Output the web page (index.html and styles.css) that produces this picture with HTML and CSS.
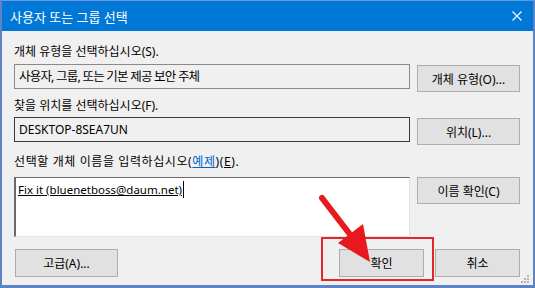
FILE: index.html
```html
<!DOCTYPE html>
<html lang="ko">
<head>
    <meta charset="UTF-8">
    <title>사용자 또는 그룹 선택</title>
    <link rel="stylesheet" href="styles.css">
</head>
<body>
    <div class="window">
        <!-- Title bar -->
        <div class="titlebar">
            <span class="title">사용자 또는 그룹 선택</span>
            <svg class="close" width="10" height="10" viewBox="0 0 10 10">
                <path d="M0.5 0.5 L9.5 9.5 M9.5 0.5 L0.5 9.5" stroke="#fff" stroke-width="1.1" fill="none"/>
            </svg>
        </div>

        <div class="content">
            <div class="label label-first">개체 유형을 선택하십시오(S).</div>
            <div class="field field-grey">사용자, 그룹, 또는 기본 제공 보안 주체</div>
            <div class="btn btn-side">개체 유형(O)...</div>

            <div class="label label-second">찾을 위치를 선택하십시오(F).</div>
            <div class="field field-dark">DESKTOP-8SEA7UN</div>
            <div class="btn btn-side">위치(L)...</div>

            <div class="label label-third">선택할 개체 이름을 입력하십시오(<span class="link">예제</span>)(<u>E</u>).</div>
            <div class="names"><span class="entry">Fix it (bluenetboss@daum.net)</span><span class="caret"></span></div>
            <div class="btn btn-side btn-check">이름 확인(C)</div>
        </div>

        <div class="footer">
            <div class="btn btn-advanced">고급(A)...</div>
            <div class="spacer"></div>
            <div class="btn btn-small">확인</div>
            <div class="btn btn-small">취소</div>
        </div>

        <!-- resize grip -->
        <svg class="grip" width="9" height="9" viewBox="0 0 9 9">
            <rect x="6" y="0" width="2" height="2" fill="#b4b4b4"/>
            <rect x="3" y="3" width="2" height="2" fill="#b4b4b4"/>
            <rect x="6" y="3" width="2" height="2" fill="#b4b4b4"/>
            <rect x="0" y="6" width="2" height="2" fill="#b4b4b4"/>
            <rect x="3" y="6" width="2" height="2" fill="#b4b4b4"/>
            <rect x="6" y="6" width="2" height="2" fill="#b4b4b4"/>
        </svg>
    </div>

    <!-- red highlight drawn over the screenshot -->
    <svg class="annot" width="535" height="288" viewBox="0 0 535 288">
        <rect x="322" y="238" width="111" height="42" fill="none" stroke="#e4262b" stroke-width="2"/>
        <line x1="322" y1="198" x2="352" y2="237" stroke="#e8191e" stroke-width="6" stroke-linecap="round"/>
        <polygon points="338,243 363,224 370,262" fill="#e8191e"/>
    </svg>
</body>
</html>
```

FILE: styles.css
```css
* {
    box-sizing: border-box;
}

body {
    margin: 0;
    font-family: "Noto Sans", "Noto Sans CJK KR", sans-serif;
    color: #000;
    position: relative;
}

.window {
    width: 535px;
    height: 288px;
    border: 2px solid #5d83c4;
    border-top: 1px solid #6f96d8;
    border-bottom-width: 3px;
    background-color: #f0f0f0;
    display: flex;
    flex-direction: column;
    position: relative;
}

.titlebar {
    height: 30px;
    flex: none;
    background-color: #0078d7;
    color: #fff;
    display: flex;
    align-items: center;
    justify-content: space-between;
    padding: 0 11px 0 8px;
    font-size: 13px;
}

.close {
    display: block;
}

.content {
    display: grid;
    grid-template-columns: 396px 103px;
    column-gap: 7px;
    align-items: start;
    padding: 13px 13px 0 12px;
}

.label {
    grid-column: 1 / 3;
    font-size: 12px;
    line-height: 16px;
    height: 16px;
    white-space: nowrap;
}

.label-first {
    margin-bottom: 4px;
}

.label-second {
    margin-top: 6px;
    margin-bottom: 3px;
}

.label-third {
    margin-top: 9px;
    margin-bottom: 7px;
    letter-spacing: 0.6px;
}

.link {
    color: #0066cc;
    text-decoration: underline;
}

.field {
    height: 25px;
    background-color: #f0f0f0;
    padding: 0 4px;
    line-height: 23px;
    white-space: nowrap;
}

.field-grey {
    border: 1px solid #8a8a8a;
    font-size: 12.5px;
    letter-spacing: -0.8px;
}

.field-dark {
    border: 1px solid #3a3a3a;
    font-size: 12px;
}

.names {
    height: 60px;
    background-color: #fff;
    border-top: 1px solid #6a6a6a;
    border-left: 2px solid #6a6a6a;
    border-right: 1px solid #e3e3e3;
    border-bottom: 1px solid #e3e3e3;
    padding: 3px 2px;
    font-size: 11.5px;
    line-height: 17px;
    display: flex;
    align-items: flex-start;
}

.entry {
    text-decoration: underline;
    white-space: nowrap;
}

.caret {
    width: 1px;
    height: 17px;
    margin-left: 1px;
    background-color: #000;
}

.btn {
    height: 27px;
    background-color: #e1e1e1;
    border: 1px solid #adadad;
    font-size: 12px;
    display: flex;
    align-items: center;
    justify-content: center;
    white-space: nowrap;
}

.btn-side {
    margin-top: 1px;
}

.btn-check {
    margin-top: 0;
}

.footer {
    display: flex;
    align-items: center;
    gap: 11px;
    padding: 12px 13px 0 13px;
}

.footer .btn {
    height: 28px;
}

.btn-advanced {
    width: 103px;
}

.btn-small {
    width: 85px;
}

.spacer {
    flex: 1;
}

.grip {
    position: absolute;
    right: 3px;
    bottom: 1px;
}

.annot {
    position: absolute;
    left: 0;
    top: 0;
    pointer-events: none;
}
```
